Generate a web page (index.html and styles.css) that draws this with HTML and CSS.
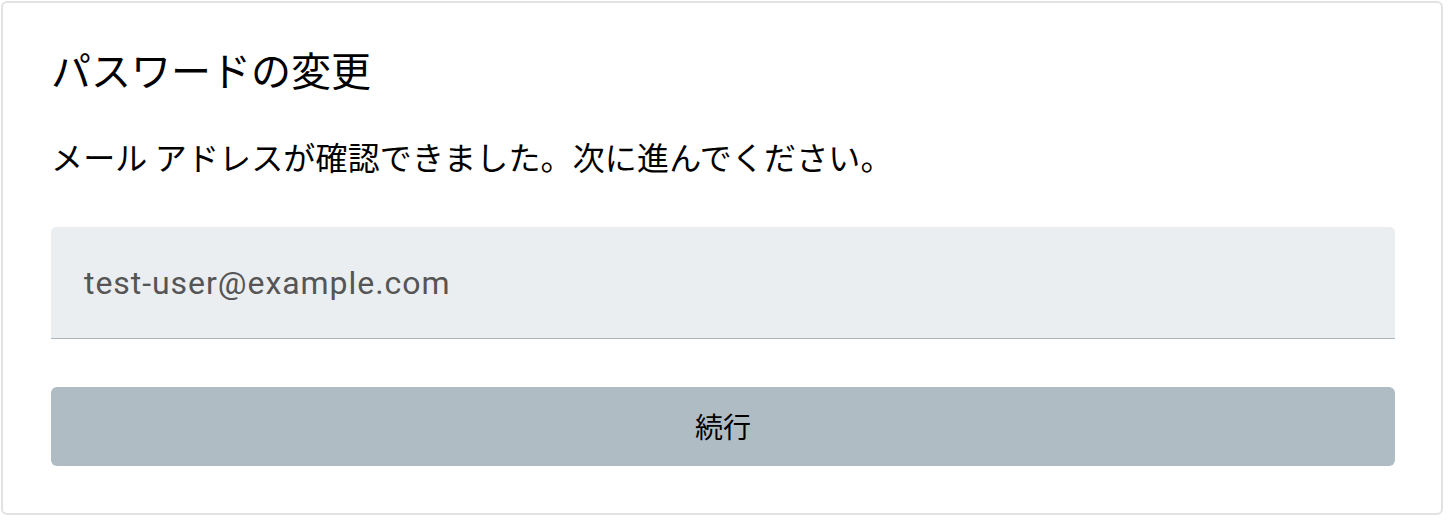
FILE: index.html
```html
<!DOCTYPE html>
<html lang="ja">
<head>
<meta charset="utf-8">
<link rel="stylesheet" href="styles.css">
</head>
<body>
<div class="card">
  <h1 class="title">パスワードの変更</h1>
  <p class="message">メール アドレスが確認できました。次に進んでください。</p>
  <div class="field">
    <span class="field-value">test-user@example.com</span>
  </div>
  <button class="submit" type="button">続行</button>
</div>
</body>
</html>
```
FILE: styles.css
```css
html, body {
  margin: 0;
  padding: 0;
  background: #ffffff;
}
body {
  padding: 1px 5px 5px 1px;
  font-family: "Noto Sans CJK JP", "Noto Sans", sans-serif;
  color: #000;
}
.card {
  box-sizing: border-box;
  height: 514px;
  border: 2px solid #e2e2e2;
  border-radius: 6px;
  padding: 36px 46px 46px 48px;
  display: flex;
  flex-direction: column;
}
.title {
  margin: 0;
  font-size: 40px;
  font-weight: 400;
  line-height: 60px;
}
.message {
  margin: 35px 0 0 0;
  font-size: 32px;
  line-height: 44px;
  letter-spacing: 0.15px;
}
.field {
  margin-top: 49px;
  height: 112px;
  flex-shrink: 0;
  background: #eaeef1;
  border-radius: 5px 5px 0 0;
  border-bottom: 1px solid #aab5be;
  display: flex;
  align-items: center;
  padding-left: 33px;
  box-sizing: border-box;
}
.field-value {
  font-family: Roboto, "Noto Sans", sans-serif;
  font-size: 32px;
  color: #555555;
  letter-spacing: 0.95px;
}
.submit {
  margin-top: 48px;
  height: 79px;
  flex-shrink: 0;
  border: none;
  border-radius: 6px;
  background: #b0bcc4;
  font-family: "Noto Sans CJK JP", sans-serif;
  font-size: 28px;
  color: #000;
  padding: 0 0 2px 0;
}
```
